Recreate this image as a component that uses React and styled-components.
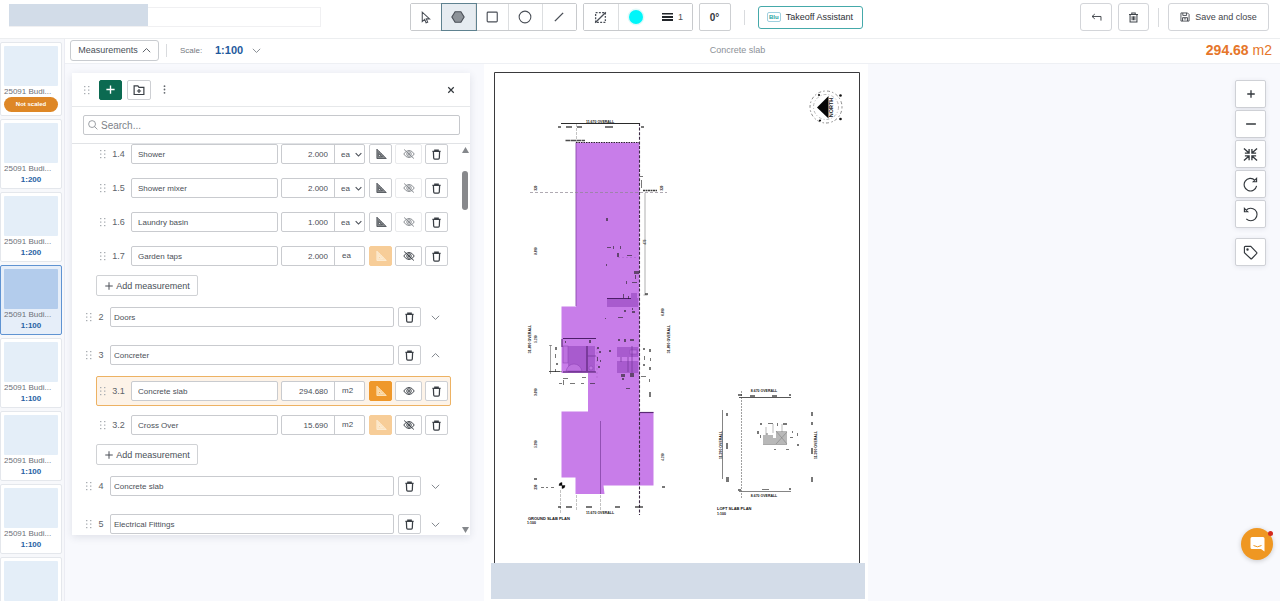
import React, { useState } from 'react';
import styled, { createGlobalStyle } from 'styled-components';

const GlobalStyle = createGlobalStyle`
  * {
    box-sizing: border-box;
  }

  body {
    margin: 0;
    background: #ffffff;
    color: #4a4f57;
    font-family: "Liberation Sans", Arial, sans-serif;
    font-size: 8px;
  }

  button, input, select {
    font-family: inherit;
    color: inherit;
    margin: 0;
  }

  button {
    cursor: pointer;
  }
`;

// Page structure
const Page = styled.div`
  display: flex;
  flex-direction: column;
  height: 100vh;
  overflow: hidden;
`;

const Header = styled.header`
  display: grid;
  grid-template-columns: 1fr auto 1fr;
  align-items: center;
  flex: none;
  height: 39px;
  padding: 0 11px 4px 3px;
  border-bottom: 1px solid #eceef0;
`;

const Body = styled.div`
  display: flex;
  flex: 1;
  min-height: 0;
`;

const Main = styled.main`
  display: flex;
  flex-direction: column;
  flex: 1;
  min-width: 0;
`;

const Workspace = styled.div`
  display: flex;
  align-items: stretch;
  flex: 1;
  min-height: 0;
  padding: 0 14px 0 7px;
  background: #f8f9fd;
`;

// Header parts
const ProjectBox = styled.div`
  width: 312px;
  height: 20px;
  margin: 0 0 0 6px;
  border: 1px solid #f0f0f2;
`;

const ProjectName = styled.div`
  width: 139px;
  height: 22px;
  margin: -4px 0 0 -1px;
  background: #d2dce8;
`;

const Tools = styled.div`
  display: flex;
  align-items: center;
`;

const ToolGroup = styled.div`
  display: flex;
  height: 28px;
  margin-right: 6px;
  border: 1px solid #c8cacd;
  border-radius: 2px;
`;

const ToolButton = styled.button`
  display: flex;
  align-items: center;
  justify-content: center;
  gap: 5px;
  width: ${(p) => p.$width || 34}px;
  padding: 0;
  border: 0;
  border-right: ${(p) => (p.$last ? 0 : 1)}px solid #dcdee0;
  background: ${(p) => (p.$active ? '#e6ecf1' : '#ffffff')};
  box-shadow: ${(p) => (p.$active ? '0 0 0 1px #5f8290' : 'none')};
  position: ${(p) => (p.$active ? 'relative' : 'static')};
  font-size: 9px;
`;

const AngleButton = styled.button`
  width: 32px;
  height: 28px;
  padding: 0;
  border: 1px solid #cdcfd2;
  border-radius: 2px;
  background: #ffffff;
  color: #33373c;
  font-size: 10px;
  font-weight: bold;
`;

const Divider = styled.div`
  width: 1px;
  height: ${(p) => p.$height}px;
  margin: 0 ${(p) => p.$gap}px;
  background: #d9dbde;
`;

const AssistantButton = styled.button`
  display: flex;
  align-items: center;
  justify-content: center;
  gap: 5px;
  width: 105px;
  height: 23px;
  padding: 0;
  border: 1px solid #45a9aa;
  border-radius: 3px;
  background: #ffffff;
  color: #2d3136;
  font-size: 9px;
`;

const BluBadge = styled.span`
  padding: 0 1px;
  border: 1px solid #9fd0e0;
  border-radius: 2px;
  color: #27a3a0;
  font-size: 6px;
  font-weight: bold;
  line-height: 8px;
`;

const Actions = styled.div`
  display: flex;
  align-items: center;
  justify-content: flex-end;
`;

const ActionButton = styled.button`
  display: flex;
  align-items: center;
  justify-content: center;
  gap: 5px;
  width: ${(p) => p.$width}px;
  height: 28px;
  margin-left: ${(p) => p.$gap || 0}px;
  padding: 0;
  border: 1px solid #d3d5d9;
  border-radius: 3px;
  background: #ffffff;
  color: #3f444a;
  font-size: 9px;
`;

// Pages column
const PageList = styled.nav`
  display: flex;
  flex-direction: column;
  flex: none;
  gap: 3px;
  width: 65px;
  padding: 3px 2px 0 0;
  overflow: hidden;
  background: #f7f8fb;
  border-right: 1px solid #ebecf3;
`;

const PageCard = styled.button`
  flex: none;
  display: block;
  padding: 3px;
  border: 1px solid ${(p) => (p.$active ? '#5f93d2' : '#e4e7ec')};
  border-radius: 2px;
  background: ${(p) => (p.$active ? '#e6eef9' : '#ffffff')};
  text-align: center;
`;

const Thumb = styled.div`
  height: 40px;
  border-radius: 1px;
  background: ${(p) => (p.$active ? '#b3ccec' : '#e4eef8')};
`;

const PageName = styled.div`
  color: #6c7178;
  font-size: 8px;
  line-height: 11px;
  text-align: left;
  white-space: nowrap;
`;

const PageScale = styled.div`
  color: #2862a4;
  font-size: 8px;
  font-weight: bold;
  line-height: 11px;
`;

const NotScaled = styled.div`
  border-radius: 8px;
  background: #de8726;
  color: #ffffff;
  font-size: 6px;
  font-weight: bold;
  line-height: 15px;
`;

// Bar under the header
const SubBar = styled.div`
  display: flex;
  align-items: center;
  flex: none;
  height: 25px;
  padding: 0 8px 2px 5px;
  border-bottom: 1px solid #eef0f4;
  background: #ffffff;
`;

const MeasurementsButton = styled.button`
  display: flex;
  align-items: center;
  justify-content: center;
  gap: 4px;
  width: 89px;
  height: 21px;
  padding: 0;
  border: 1px solid #c9ccd0;
  border-radius: 3px;
  background: #ffffff;
  font-size: 9px;
`;

const ScaleLabel = styled.span`
  width: 35px;
  margin-left: 6px;
  color: #747980;
  font-size: 8px;
`;

const ScaleButton = styled.button`
  display: flex;
  align-items: center;
  justify-content: space-between;
  width: 54px;
  padding: 0 8px 0 0;
  border: 0;
  background: none;
  color: #1f5a9d;
  font-size: 11px;
  font-weight: bold;

  svg {
    color: #7d8289;
  }
`;

const CurrentName = styled.div`
  flex: 1;
  color: #8c9197;
  font-size: 9px;
  text-align: center;
`;

const Total = styled.div`
  color: #e6762a;
  font-size: 14px;
  line-height: 16px;
`;

// Measurement panel
const Panel = styled.section`
  display: flex;
  flex-direction: column;
  flex: none;
  width: 398px;
  margin: 9px 14px 66px 0;
  background: #ffffff;
  box-shadow: 0 2px 8px rgba(40, 50, 80, 0.12);
`;

const PanelHeader = styled.div`
  display: flex;
  align-items: center;
  flex: none;
  gap: 5px;
  height: 34px;
  padding: 0 14px 0 11px;
  border-bottom: 1px solid #e6e8ea;
`;

const GripSlot = styled.div`
  width: 11px;
  height: 10px;
`;

const PlainButton = styled.button`
  display: flex;
  align-items: center;
  justify-content: center;
  width: ${(p) => p.$width || 10}px;
  height: 20px;
  margin-left: ${(p) => (p.$push ? 'auto' : '0')};
  padding: 0;
  border: 0;
  background: none;
  color: ${(p) => (p.$push ? '#33383d' : '#747980')};
`;

const SearchArea = styled.div`
  flex: none;
  padding: 8px 10px 8px 11px;
  border-bottom: 1px solid #e1e3e6;
`;

const SearchBox = styled.label`
  display: flex;
  align-items: center;
  gap: 3px;
  height: 20px;
  padding: 0 4px;
  border: 1px solid #c6c8cc;
  border-radius: 2px;
  color: #84898f;
`;

const SearchInput = styled.input`
  flex: 1;
  min-width: 0;
  padding: 0;
  border: 0;
  outline: none;
  background: none;
  font-size: 10px;

  &::placeholder {
    color: #7d8289;
  }
`;

const ListArea = styled.div`
  display: flex;
  flex: 1;
  min-height: 0;
  overflow: hidden;
`;

const List = styled.div`
  flex: 1;
  min-width: 0;
  margin-top: -7px;
`;

const Rail = styled.div`
  display: flex;
  flex-direction: column;
  align-items: center;
  justify-content: space-between;
  width: 9px;
  padding: 3px 1px 2px 0;
  color: #85888c;
`;

const RailTop = styled.div`
  display: flex;
  flex-direction: column;
  align-items: center;
  gap: 18px;
`;

const RailThumb = styled.div`
  width: 6px;
  height: 39px;
  border-radius: 3px;
  background: #88898c;
`;

const MeasureRow = styled.div`
  display: grid;
  grid-template-columns: 7px 25px 1fr auto auto;
  align-items: center;
  height: 30px;
  margin: 2px 10px 4px 24px;
  padding: 0 2px;
  border: 1px solid ${(p) => (p.$active ? '#edb263' : 'transparent')};
  border-radius: 2px;
  background: ${(p) => (p.$active ? '#fdf3e8' : 'none')};
`;

const GroupRow = styled.div`
  display: grid;
  grid-template-columns: 7px 18px 1fr auto 28px;
  align-items: center;
  height: 38px;
  padding: 0 12px 0 13px;
`;

const RowNumber = styled.span`
  color: #5d6369;
  font-size: 9px;
  text-align: center;
`;

const NameInput = styled.input`
  width: 100%;
  min-width: 0;
  height: 20px;
  padding: 0 ${(p) => (p.$group ? 3 : 6)}px;
  border: 1px solid #c9cbcf;
  border-radius: 2px;
  background: #ffffff;
  font-size: 8px;
`;

const Amount = styled.div`
  display: flex;
  width: 84px;
  height: 20px;
  margin-left: 3px;
  border: 1px solid #c9cbcf;
  border-radius: 2px;
  background: #ffffff;
`;

const QuantityInput = styled.input`
  width: 53px;
  padding: 0 6px 0 0;
  border: 0;
  border-right: 1px solid #c9cbcf;
  background: none;
  font-size: 8px;
  text-align: right;
`;

const Unit = styled.span`
  flex: 1;
  padding-left: 7px;
  font-size: 8px;
  line-height: 18px;
`;

const UnitBox = styled.div`
  display: flex;
  align-items: center;
  flex: 1;
  position: relative;

  svg {
    position: absolute;
    right: 2px;
    pointer-events: none;
  }
`;

const UnitSelect = styled.select`
  appearance: none;
  width: 100%;
  height: 100%;
  padding: 0 0 0 6px;
  border: 0;
  background: none;
  font-size: 8px;
`;

const buttonColors = {
  plain: { border: '#cdcfd3', fill: '#ffffff', color: '#3a3f45' },
  muted: { border: '#e9eaec', fill: '#ffffff', color: '#85898e' },
  green: { border: '#0b6a51', fill: '#0b6a51', color: '#ffffff' },
  orange: { border: '#ef982b', fill: '#ef982b', color: '#fff0d4' },
  pale: { border: '#f7cd98', fill: '#f7cd98', color: '#fdf1dd' },
};

const IconButton = styled.button`
  display: flex;
  align-items: center;
  justify-content: center;
  flex: none;
  width: ${(p) => p.$width || 23}px;
  height: 20px;
  padding: 0;
  border: 1px solid ${(p) => buttonColors[p.$tone || 'plain'].border};
  border-radius: 2px;
  background: ${(p) => buttonColors[p.$tone || 'plain'].fill};
  color: ${(p) => buttonColors[p.$tone || 'plain'].color};
`;

const Buttons = styled.div`
  display: flex;
  gap: 3px;
  margin-left: 4px;
`;

const AddButton = styled.button`
  display: flex;
  align-items: center;
  justify-content: center;
  gap: 2px;
  width: 102px;
  height: 21px;
  margin: 0 0 2px 24px;
  padding: 0;
  border: 1px solid #d0d2d5;
  border-radius: 2px;
  background: #ffffff;
  font-size: 9px;
`;

// Drawing and view controls
const Sheet = styled.div`
  flex: none;
  overflow: hidden;
  background: #ffffff;

  svg {
    display: block;
  }
`;

const ViewTools = styled.div`
  display: flex;
  flex-direction: column;
  gap: 2px;
  margin: 16px 0 0 auto;
`;

const ViewButton = styled.button`
  display: flex;
  align-items: center;
  justify-content: center;
  width: 31px;
  height: 28px;
  padding: 0;
  border: 1px solid #cfd1d6;
  border-radius: 2px;
  background: #ffffff;
  box-shadow: 0 1px 5px rgba(40, 50, 80, 0.1);
  color: #33383d;

  &:last-child {
    margin-top: 8px;
  }
`;

const ChatButton = styled.button`
  position: fixed;
  right: 7px;
  bottom: 41px;
  display: flex;
  align-items: center;
  justify-content: center;
  width: 32px;
  height: 32px;
  padding: 0;
  border: 0;
  border-radius: 50%;
  background: #ef9722;
  box-shadow: 0 1px 5px rgba(0, 0, 0, 0.2);
`;

const ChatDot = styled.span`
  position: absolute;
  top: 3px;
  right: 0;
  width: 5px;
  height: 5px;
  border-radius: 50%;
  background: #d42a1e;
`;

// Icons
const Icon = ({ size = 12, box = 16, width = 1.3, children }) => (
  <svg width={size} height={size} viewBox={`0 0 ${box} ${box}`} fill="none" stroke="currentColor" strokeWidth={width} aria-hidden="true">
    {children}
  </svg>
);

const Grip = () => (
  <svg width="7" height="10" viewBox="0 0 7 10" fill="#a9adb2" aria-hidden="true">
    {[1, 4.5, 8].map((y) => (
      <g key={y}>
        <rect x="1" y={y} width="1.4" height="1.2" />
        <rect x="5" y={y} width="1.4" height="1.2" />
      </g>
    ))}
  </svg>
);

const Chevron = ({ up, size = 9, width = 1.6 }) => (
  <Icon size={size} width={width}>
    <path d={up ? 'M1.5 11 8 4.5l6.5 6.5' : 'M1.5 5 8 11.5 14.5 5'} />
  </Icon>
);

const TrashIcon = () => (
  <Icon size={11} width={1.8}>
    <path d="M2 3.500h12M5.500 3.300V1.500h5v1.800M3.500 3.700l.4 9.500q.1 1.500 1.500 1.500h5.200q1.400 0 1.500-1.500l.4-9.500" />
  </Icon>
);

const RulerIcon = () => (
  <Icon size={12} width={1}>
    <path fillRule="evenodd" fill="currentColor" fillOpacity="0.6" d="M2.500 1.500v12.500h12.500zM5 7.500v4h4z" />
    <path d="M6 5l-1.200 1.200M8.500 7.500l-1.200 1.200M11 10l-1.200 1.200" />
  </Icon>
);

const EyeIcon = ({ off }) => (
  <Icon size={12} width={1.3}>
    <path d="M1 8q3-4.700 7-4.700T15 8q-3 4.700-7 4.700T1 8z" />
    <circle cx="8" cy="8" r="3" />
    <circle cx="8" cy="8" r="1" />
    {off && <path d="M1.500 2l13 12" />}
  </Icon>
);

const PlusIcon = ({ size = 12, width = 1.8 }) => (
  <Icon size={size} width={width}>
    <path d="M8 2v12M2 8h12" />
  </Icon>
);

const pages = [
  { scale: null },
  { scale: '1:200' },
  { scale: '1:200' },
  { scale: '1:100', active: true },
  { scale: '1:100' },
  { scale: '1:100' },
  { scale: '1:100' },
  { scale: '1:100' },
];

const groups = [
  {
    items: [
      { no: '1.4', name: 'Shower', qty: '2.000', unit: 'ea', counted: true },
      { no: '1.5', name: 'Shower mixer', qty: '2.000', unit: 'ea', counted: true },
      { no: '1.6', name: 'Laundry basin', qty: '1.000', unit: 'ea', counted: true },
      { no: '1.7', name: 'Garden taps', qty: '2.000', unit: 'ea' },
    ],
  },
  { no: '2', name: 'Doors' },
  {
    no: '3',
    name: 'Concreter',
    items: [
      { no: '3.1', name: 'Concrete slab', qty: '294.680', unit: 'm2' },
      { no: '3.2', name: 'Cross Over', qty: '15.690', unit: 'm2' },
    ],
  },
  { no: '4', name: 'Concrete slab' },
  { no: '5', name: 'Electrical Fittings' },
];

function Measurement({ item, active, onSelect }) {
  return (
    <MeasureRow $active={active} onClick={onSelect}>
      <Grip />
      <RowNumber>{item.no}</RowNumber>
      <NameInput aria-label={`Name ${item.no}`} defaultValue={item.name} />
      <Amount>
        <QuantityInput aria-label={`Quantity ${item.no}`} defaultValue={item.qty} />
        {item.counted ? (
          <UnitBox>
            <UnitSelect aria-label={`Unit ${item.no}`} defaultValue={item.unit}>
              <option>ea</option>
              <option>m2</option>
            </UnitSelect>
            <Chevron size={7} width={2.6} />
          </UnitBox>
        ) : (
          <Unit>{item.unit}</Unit>
        )}
      </Amount>
      <Buttons>
        <IconButton $tone={item.counted ? 'plain' : active ? 'orange' : 'pale'} aria-label="Measure">
          <RulerIcon />
        </IconButton>
        <IconButton $width={27} $tone={item.counted ? 'muted' : 'plain'} aria-label="Visibility">
          <EyeIcon off={!active} />
        </IconButton>
        <IconButton aria-label="Delete">
          <TrashIcon />
        </IconButton>
      </Buttons>
    </MeasureRow>
  );
}

function Group({ group, selected, setSelected }) {
  return (
    <>
      {group.no && (
        <GroupRow>
          <Grip />
          <RowNumber>{group.no}</RowNumber>
          <NameInput $group aria-label={`Group ${group.no}`} defaultValue={group.name} />
          <Buttons>
            <IconButton aria-label="Delete group">
              <TrashIcon />
            </IconButton>
          </Buttons>
          <PlainButton $width={28} aria-label="Toggle group">
            <Chevron up={!!group.items} />
          </PlainButton>
        </GroupRow>
      )}
      {group.items && (
        <>
          {group.items.map((item) => (
            <Measurement key={item.no} item={item} active={selected === item.no} onSelect={() => setSelected(item.no)} />
          ))}
          <AddButton>
            <PlusIcon size={10} width={1.6} />
            Add measurement
          </AddButton>
        </>
      )}
    </>
  );
}

// Small dimension marks around the plan: x, y, width, height
const marks = [
  [558, 126, 3, 2], [566, 126, 6, 2], [577, 126, 5, 2], [605, 126, 8, 2], [641, 126, 3, 2],
  [640, 176, 3, 1], [641, 180, 1, 8], [606, 218, 2, 3], [607, 247, 4, 1], [613, 246, 1, 3], [620, 246, 1, 3],
  [617, 253, 2, 4], [627, 255, 5, 1], [606, 264, 1, 2], [634, 271, 5, 3], [635, 275, 1, 4], [626, 281, 1, 3],
  [632, 282, 5, 1], [623, 294, 1, 4], [628, 296, 1, 3], [645, 293, 3, 2], [624, 310, 2, 2], [632, 311, 3, 2],
  [618, 317, 5, 1], [605, 318, 1, 1], [632, 308, 1, 2],
  [565, 341, 1, 2], [589, 340, 2, 3], [618, 339, 2, 2], [624, 339, 2, 3], [630, 339, 4, 2],
  [597, 347, 2, 2], [599, 351, 2, 2], [597, 357, 1, 4], [600, 360, 1, 2], [598, 366, 2, 2],
  [555, 347, 2, 3], [555, 354, 1, 4], [556, 363, 2, 2], [555, 369, 1, 3], [549, 371, 11, 1],
  [563, 378, 5, 1], [582, 377, 4, 1], [559, 383, 3, 1], [563, 380, 1, 5], [570, 383, 5, 1], [581, 383, 3, 1], [590, 383, 5, 1],
  [609, 350, 2, 2], [621, 374, 4, 3], [630, 373, 4, 4], [622, 378, 2, 2], [626, 388, 4, 1],
  [643, 348, 2, 2], [649, 349, 2, 3], [644, 356, 1, 4], [650, 358, 1, 3], [643, 364, 2, 2], [649, 367, 2, 3], [641, 376, 5, 1],
  [649, 379, 1, 3], [649, 392, 2, 5], [541, 487, 3, 1], [546, 487, 2, 1], [551, 487, 3, 1], [534, 478, 3, 2], [662, 486, 3, 2],
  [558, 506, 3, 2], [566, 506, 6, 2], [586, 506, 6, 2], [615, 506, 5, 2], [635, 506, 8, 2],
  [738, 394, 4, 2], [750, 395, 5, 2], [772, 395, 5, 2], [789, 394, 2, 2], [726, 413, 2, 3], [726, 443, 2, 6], [726, 477, 3, 5],
  [811, 412, 2, 4], [811, 422, 2, 3], [811, 448, 2, 6], [811, 477, 2, 5], [738, 489, 3, 2], [762, 489, 7, 1], [789, 488, 2, 2],
  [760, 423, 2, 2], [768, 423, 5, 1], [777, 423, 1, 3], [783, 423, 4, 2], [757, 431, 2, 3], [760, 435, 1, 3],
  [790, 437, 3, 1], [797, 433, 1, 3], [797, 444, 2, 2], [792, 431, 1, 2], [774, 449, 2, 1], [786, 449, 3, 1],
];

const labels = [
  { x: 600, y: 122.5, text: '11.670 OVERALL' },
  { x: 600, y: 513.5, text: '11.670 OVERALL' },
  { x: 764, y: 391.5, text: '8.670 OVERALL' },
  { x: 764, y: 496.5, text: '8.670 OVERALL' },
  { x: 531, y: 339, text: '31.890 OVERALL', turn: true },
  { x: 670, y: 339, text: '31.890 OVERALL', turn: true },
  { x: 722, y: 445, text: '11.390 OVERALL', turn: true },
  { x: 817, y: 445, text: '11.390 OVERALL', turn: true },
  { x: 537, y: 188, text: '320', turn: true },
  { x: 663, y: 188, text: '320', turn: true },
  { x: 537, y: 251, text: '8.890', turn: true },
  { x: 646, y: 242, text: '475', turn: true },
  { x: 537, y: 339, text: '5.190', turn: true },
  { x: 664, y: 312, text: '6.890', turn: true },
  { x: 537, y: 392, text: '3.090', turn: true },
  { x: 537, y: 444, text: '5.390', turn: true },
  { x: 664, y: 457, text: '4.190', turn: true },
  { x: 537, y: 487, text: '230', turn: true },
];

const slab =
  'M576 142.5H639.5V412H653.5V485.5H603.5L604.5 494H575.5V477.5H561.5V411.5H588V373H561.5V306.5H576Z';

function Plan() {
  return (
    <svg width="384" height="537" viewBox="484 64 384 537" role="img" aria-label="Ground slab plan">
      <path d="M494.5 570V72.5H859.5V570" fill="none" stroke="#3a3a3d" strokeWidth="1" />

      <path d={slab} fill="#c87de9" />
      <path d="M576 142.5V306M600.5 421V494" stroke="#8b4bad" strokeWidth="0.9" fill="none" />
      <path d="M639.5 412.5H653.5" stroke="#5a2a74" strokeWidth="1.2" />
      <path d="M576 142.5H639.5" stroke="#2c2430" strokeDasharray="1.5 1" />
      <path d="M639.5 123V515" stroke="#3c2a45" strokeWidth="1.1" strokeDasharray="3 1.6" />
      <path d="M530 192.5H667" stroke="#8d8591" strokeWidth="0.7" strokeDasharray="3 2" />
      <path d="M561 123.5H640" stroke="#2a2a2a" />
      <path d="M565.5 140.5H585" stroke="#1f1f1f" strokeWidth="1.6" strokeDasharray="5 0.5" strokeOpacity="0.8" />
      <path d="M576.5 124V142M560.5 490V514M576.5 495V511M600.5 495V511" stroke="#9a9a9a" strokeWidth="0.6" strokeDasharray="3 1" />
      <path d="M643 190.5H657" stroke="#3c3c3c" strokeWidth="1.3" strokeDasharray="2 0.5" />
      <path d="M645 193V295M643.5 295h4" stroke="#8c8c8c" strokeWidth="0.7" fill="none" />
      <path d="M550.5 345V374M549 345.5h3M549 371.5h13" stroke="#777" strokeWidth="0.7" fill="none" />

      <g fill="#a85bce">
        <rect x="607" y="298" width="31" height="9" />
        <rect x="631" y="293" width="6" height="5" />
        <rect x="568" y="346" width="27" height="26" />
        <rect x="617" y="347" width="21" height="10" />
        <rect x="617" y="361" width="21" height="12" />
      </g>
      <g fill="#bd72df" stroke="#8a40b2" strokeWidth="0.5">
        <rect x="563" y="346" width="5" height="17" />
        <path d="M566 371q2-7 8-7t8 7z" />
        <circle cx="591" cy="368" r="2" />
        <rect x="630" y="350" width="7" height="4" />
      </g>
      <path d="M563 338.5H596M563 372H596M587 346V371M607 298.5H631M562 339V347" stroke="#4d1d69" strokeWidth="1" />
      <path d="M587 356H596M621 357V362M628 357V372M632 346V373" stroke="#74349a" strokeWidth="0.7" />
      <path d="M618 257.5H638M597 348V380" stroke="#a45bc7" strokeWidth="0.5" strokeDasharray="2 2" />

      <path d="M741.5 391V498" stroke="#777" strokeWidth="0.7" strokeDasharray="2 1" />
      <path d="M739 397.5H791" stroke="#444" strokeWidth="0.9" />
      <path d="M739 491.5H791M722.5 410V479" stroke="#666" strokeWidth="0.8" />
      <path d="M763 435h3v-2h2v2h5v3h3v-7h11v13.5h-24z" fill="#b8b8b8" />
      <path d="M776 431l11 13M787 432l-11 12M763 444.5h24M766 427v8M773 424v9M782 424v8" stroke="#777" strokeWidth="0.5" />

      <g fill="#1e1e1e" fillOpacity="0.6">
        {marks.map(([x, y, w, h]) => (
          <rect key={`${x}-${y}`} x={x} y={y} width={w} height={h} />
        ))}
      </g>

      <g fill="#151515" fontWeight="bold" textAnchor="middle">
        {labels.map((l) => (
          <text key={`${l.x}-${l.y}`} x={l.x} y={l.y} fontSize={l.text.length < 6 ? 3 : 3.5} transform={l.turn ? `rotate(-90 ${l.x} ${l.y})` : undefined}>
            {l.text}
          </text>
        ))}
      </g>
      <g fill="#0d0d0d" fontSize="4" fontWeight="bold">
        <text x="528" y="519.5">GROUND SLAB PLAN</text>
        <text x="527" y="523.5" fontSize="3.5">1:100</text>
        <text x="717" y="509.5">LOFT SLAB PLAN</text>
        <text x="717" y="514.5" fontSize="3.5">1:100</text>
      </g>

      <circle cx="562" cy="485.500" r="3" fill="#fff" />
      <path d="M562 485.500V482.500A3 3 0 0 0 559 485.500ZM562 485.500V488.500A3 3 0 0 0 565 485.500Z" fill="#0a0a0a" stroke="#0a0a0a" strokeWidth="0.4" />

      {/* north arrow */}
      <circle cx="826" cy="107" r="16" fill="none" stroke="#8a8a8a" strokeWidth="1" strokeDasharray="1.5 2.5 3 2" />
      <circle cx="826" cy="107" r="12.5" fill="none" stroke="#9a9a9a" strokeWidth="0.7" strokeDasharray="3 2 1 2" />
      <path d="M817 107.5L828.5 96V118.5z" fill="#060606" />
      <g fill="#111">
        <circle cx="840.5" cy="95.5" r="1.3" />
        <circle cx="840.5" cy="119" r="1.3" />
        <circle cx="819" cy="95" r="1.1" />
        <circle cx="820" cy="120.5" r="1.1" />
      </g>
      <text x="832.8" y="107.5" transform="rotate(-90 832.8 107.5)" fontSize="5.5" fontWeight="bold" textAnchor="middle" fill="#222">
        NORTH
      </text>

      <rect x="491" y="563" width="374" height="36" fill="#d3dce8" />
    </svg>
  );
}

export default function App() {
  const [tool, setTool] = useState('polygon');
  const [selected, setSelected] = useState('3.1');

  return (
    <Page>
      <GlobalStyle />
      <Header>
        <ProjectBox>
          <ProjectName />
        </ProjectBox>
        <Tools>
          <ToolGroup>
            <ToolButton $width={31} $active={tool === 'select'} onClick={() => setTool('select')} aria-label="Select">
              <Icon size={13} width={1.3}><path d="M4 1.5v11.5l3-2.7 1.7 4.2 2-.8-1.700-4h4z" /></Icon>
            </ToolButton>
            <ToolButton $width={34} $active={tool === 'polygon'} onClick={() => setTool('polygon')} aria-label="Polygon">
              <Icon size={14} width={1.3}><path fill="#8c9298" d="M4.7 2h6.600L15 8l-3.700 6H4.700L1 8z" /></Icon>
            </ToolButton>
            <ToolButton $width={33} $active={tool === 'rectangle'} onClick={() => setTool('rectangle')} aria-label="Rectangle">
              <Icon size={14} width={1.3}><rect x="2.5" y="2.5" width="11.5" height="11" rx="1" /></Icon>
            </ToolButton>
            <ToolButton $width={34} $active={tool === 'circle'} onClick={() => setTool('circle')} aria-label="Circle">
              <Icon size={14} width={1.2}><circle cx="8" cy="8" r="6.7" /></Icon>
            </ToolButton>
            <ToolButton $width={33} $last $active={tool === 'line'} onClick={() => setTool('line')} aria-label="Line">
              <Icon size={12} width={1.8}><path d="M2.5 13.500l11-11" /></Icon>
            </ToolButton>
          </ToolGroup>
          <ToolGroup>
            <ToolButton $width={35} aria-label="Deduct">
              <Icon size={13} width={1.6}>
                <rect x="2" y="2" width="12" height="12" strokeDasharray="2.400 1.600" />
                <path d="M1.500 14.500l13-13" />
              </Icon>
            </ToolButton>
            <ToolButton $width={35} $last aria-label="Colour">
              <svg width="18" height="18" viewBox="0 0 18 18"><circle cx="9" cy="9" r="8.5" fill="#dffafa" /><circle cx="9" cy="9" r="7" fill="#00f6fa" /></svg>
            </ToolButton>
            <ToolButton $width={38} $last aria-label="Line width">
              <svg width="11" height="8" viewBox="0 0 11 8" fill="#22262a"><path d="M0 0h11v1.500H0zM0 3h11v2H0zM0 6h11v2H0z" /></svg>
              1
            </ToolButton>
          </ToolGroup>
          <AngleButton>0°</AngleButton>
          <Divider $height={15} $gap={13} />
          <AssistantButton>
            <BluBadge>Blu</BluBadge>
            Takeoff Assistant
          </AssistantButton>
        </Tools>
        <Actions>
          <ActionButton $width={32} aria-label="Undo">
            <Icon size={11} width={1.4}><path d="M5.500 3L1.500 6.500l4 3.500M1.500 6.500H14.500v6" /></Icon>
          </ActionButton>
          <ActionButton $width={31} $gap={6} aria-label="Delete">
            <Icon size={11} width={1.5}><path d="M1.500 3.500h13M5.500 3V1.500h5V3M3 4v10.500h10V4M6 6v6M8 6v6M10 6v6" /></Icon>
          </ActionButton>
          <Divider $height={19} $gap={9} />
          <ActionButton $width={101}>
            <Icon size={10} width={1.4}><path d="M1.500 1.500h10.500l2.500 2.500v10.500h-13zM4.500 1.500v4h6v-4M4 14.500V9h8v5.500M6 11h4" /></Icon>
            Save and close
          </ActionButton>
        </Actions>
      </Header>

      <Body>
        <PageList aria-label="Pages">
          {pages.map((page, i) => (
            <PageCard key={i} $active={page.active}>
              <Thumb $active={page.active} />
              <PageName>25091 Budi...</PageName>
              {page.scale ? <PageScale>{page.scale}</PageScale> : <NotScaled>Not scaled</NotScaled>}
            </PageCard>
          ))}
        </PageList>

        <Main>
          <SubBar>
            <MeasurementsButton>
              Measurements
              <Chevron up />
            </MeasurementsButton>
            <Divider $height={13} $gap={7} />
            <ScaleLabel>Scale:</ScaleLabel>
            <ScaleButton aria-label="Scale 1:100">
              1:100
              <Chevron />
            </ScaleButton>
            <CurrentName>Concrete slab</CurrentName>
            <Total>
              <b>294.68</b> m2
            </Total>
          </SubBar>

          <Workspace>
            <Panel>
              <PanelHeader>
                <GripSlot><Grip /></GripSlot>
                <IconButton $tone="green" aria-label="Add"><PlusIcon size={11} width={2} /></IconButton>
                <IconButton $width={24} aria-label="Add group">
                  <Icon size={12} width={1.6}>
                    <path d="M1.500 2.500h5l1.500 2h6.500v9.500h-13zM8 6.500v5.500M5.200 9.300h5.600" />
                  </Icon>
                </IconButton>
                <PlainButton $width={16} aria-label="More">
                  <svg width="3" height="9" viewBox="0 0 3 9" fill="#62676d"><circle cx="1.5" cy="1.2" r="0.9" /><circle cx="1.5" cy="4.5" r="0.9" /><circle cx="1.5" cy="7.8" r="0.9" /></svg>
                </PlainButton>
                <PlainButton $push aria-label="Close">
                  <Icon size={8} width={2.4}><path d="M2.500 2.500l11 11M13.500 2.500l-11 11" /></Icon>
                </PlainButton>
              </PanelHeader>
              <SearchArea>
                <SearchBox>
                  <Icon size={10} width={1.3}><circle cx="6.5" cy="6.5" r="5.5" /><path d="M10.500 10.500L15 15" /></Icon>
                  <SearchInput type="text" placeholder="Search..." aria-label="Search" />
                </SearchBox>
              </SearchArea>
              <ListArea>
                <List>
                  {groups.map((group, i) => (
                    <Group key={i} group={group} selected={selected} setSelected={setSelected} />
                  ))}
                </List>
                <Rail>
                  <RailTop>
                    <svg width="7" height="6" viewBox="0 0 7 6" fill="currentColor"><path d="M3.500 0L7 6H0z" /></svg>
                    <RailThumb />
                  </RailTop>
                  <svg width="7" height="6" viewBox="0 0 7 6" fill="currentColor"><path d="M3.500 6L7 0H0z" /></svg>
                </Rail>
              </ListArea>
            </Panel>

            <Sheet>
              <Plan />
            </Sheet>

            <ViewTools>
              <ViewButton aria-label="Zoom in"><PlusIcon size={10} width={2.1} /></ViewButton>
              <ViewButton aria-label="Zoom out"><Icon size={12} width={2}><path d="M1.500 8h13" /></Icon></ViewButton>
              <ViewButton aria-label="Fit">
                <Icon size={15} width={1.4}>
                  <path d="M1 1.500l5.500 5M6.500 2v4.500H2M15 1.500l-5.500 5M9.500 2v4.500H14M1 14.500l5.500-5M6.500 14V9.500H2M15 14.500l-5.500-5M9.500 14V9.500H14" />
                </Icon>
              </ViewButton>
              <ViewButton aria-label="Rotate right">
                <Icon size={15} width={1.2}><path d="M14.500 9.500A6.700 6.700 0 1 1 12.700 3.500M14.500 1.500v3.500h-3.500z" /></Icon>
              </ViewButton>
              <ViewButton aria-label="Rotate left">
                <Icon size={15} width={1.2}><path d="M3.500 12.700A6.700 6.700 0 1 0 3.300 3.500M1.500 1.500v3.500h3.500z" /></Icon>
              </ViewButton>
              <ViewButton aria-label="Labels">
                <Icon size={15} width={1.2}><path d="M1.500 2.500q0-1 1-1h5.800l6.200 6.300q.7.700 0 1.400l-5 5.200q-.7.700-1.400 0L1.500 8.300z" /><circle cx="4.8" cy="4.8" r="0.7" /></Icon>
              </ViewButton>
            </ViewTools>
          </Workspace>
        </Main>
      </Body>

      <ChatButton aria-label="Chat">
        <svg width="15" height="16" viewBox="0 0 15 16">
          <path d="M2 1h11q1.500 0 1.500 1.500V15.500L11 13H2Q.5 13 .5 11.500v-9Q.5 1 2 1z" fill="#fff" />
          <path d="M3.500 9.500q4 2.600 8 0" fill="none" stroke="#ef9722" strokeWidth="1" />
        </svg>
        <ChatDot />
      </ChatButton>
    </Page>
  );
}
